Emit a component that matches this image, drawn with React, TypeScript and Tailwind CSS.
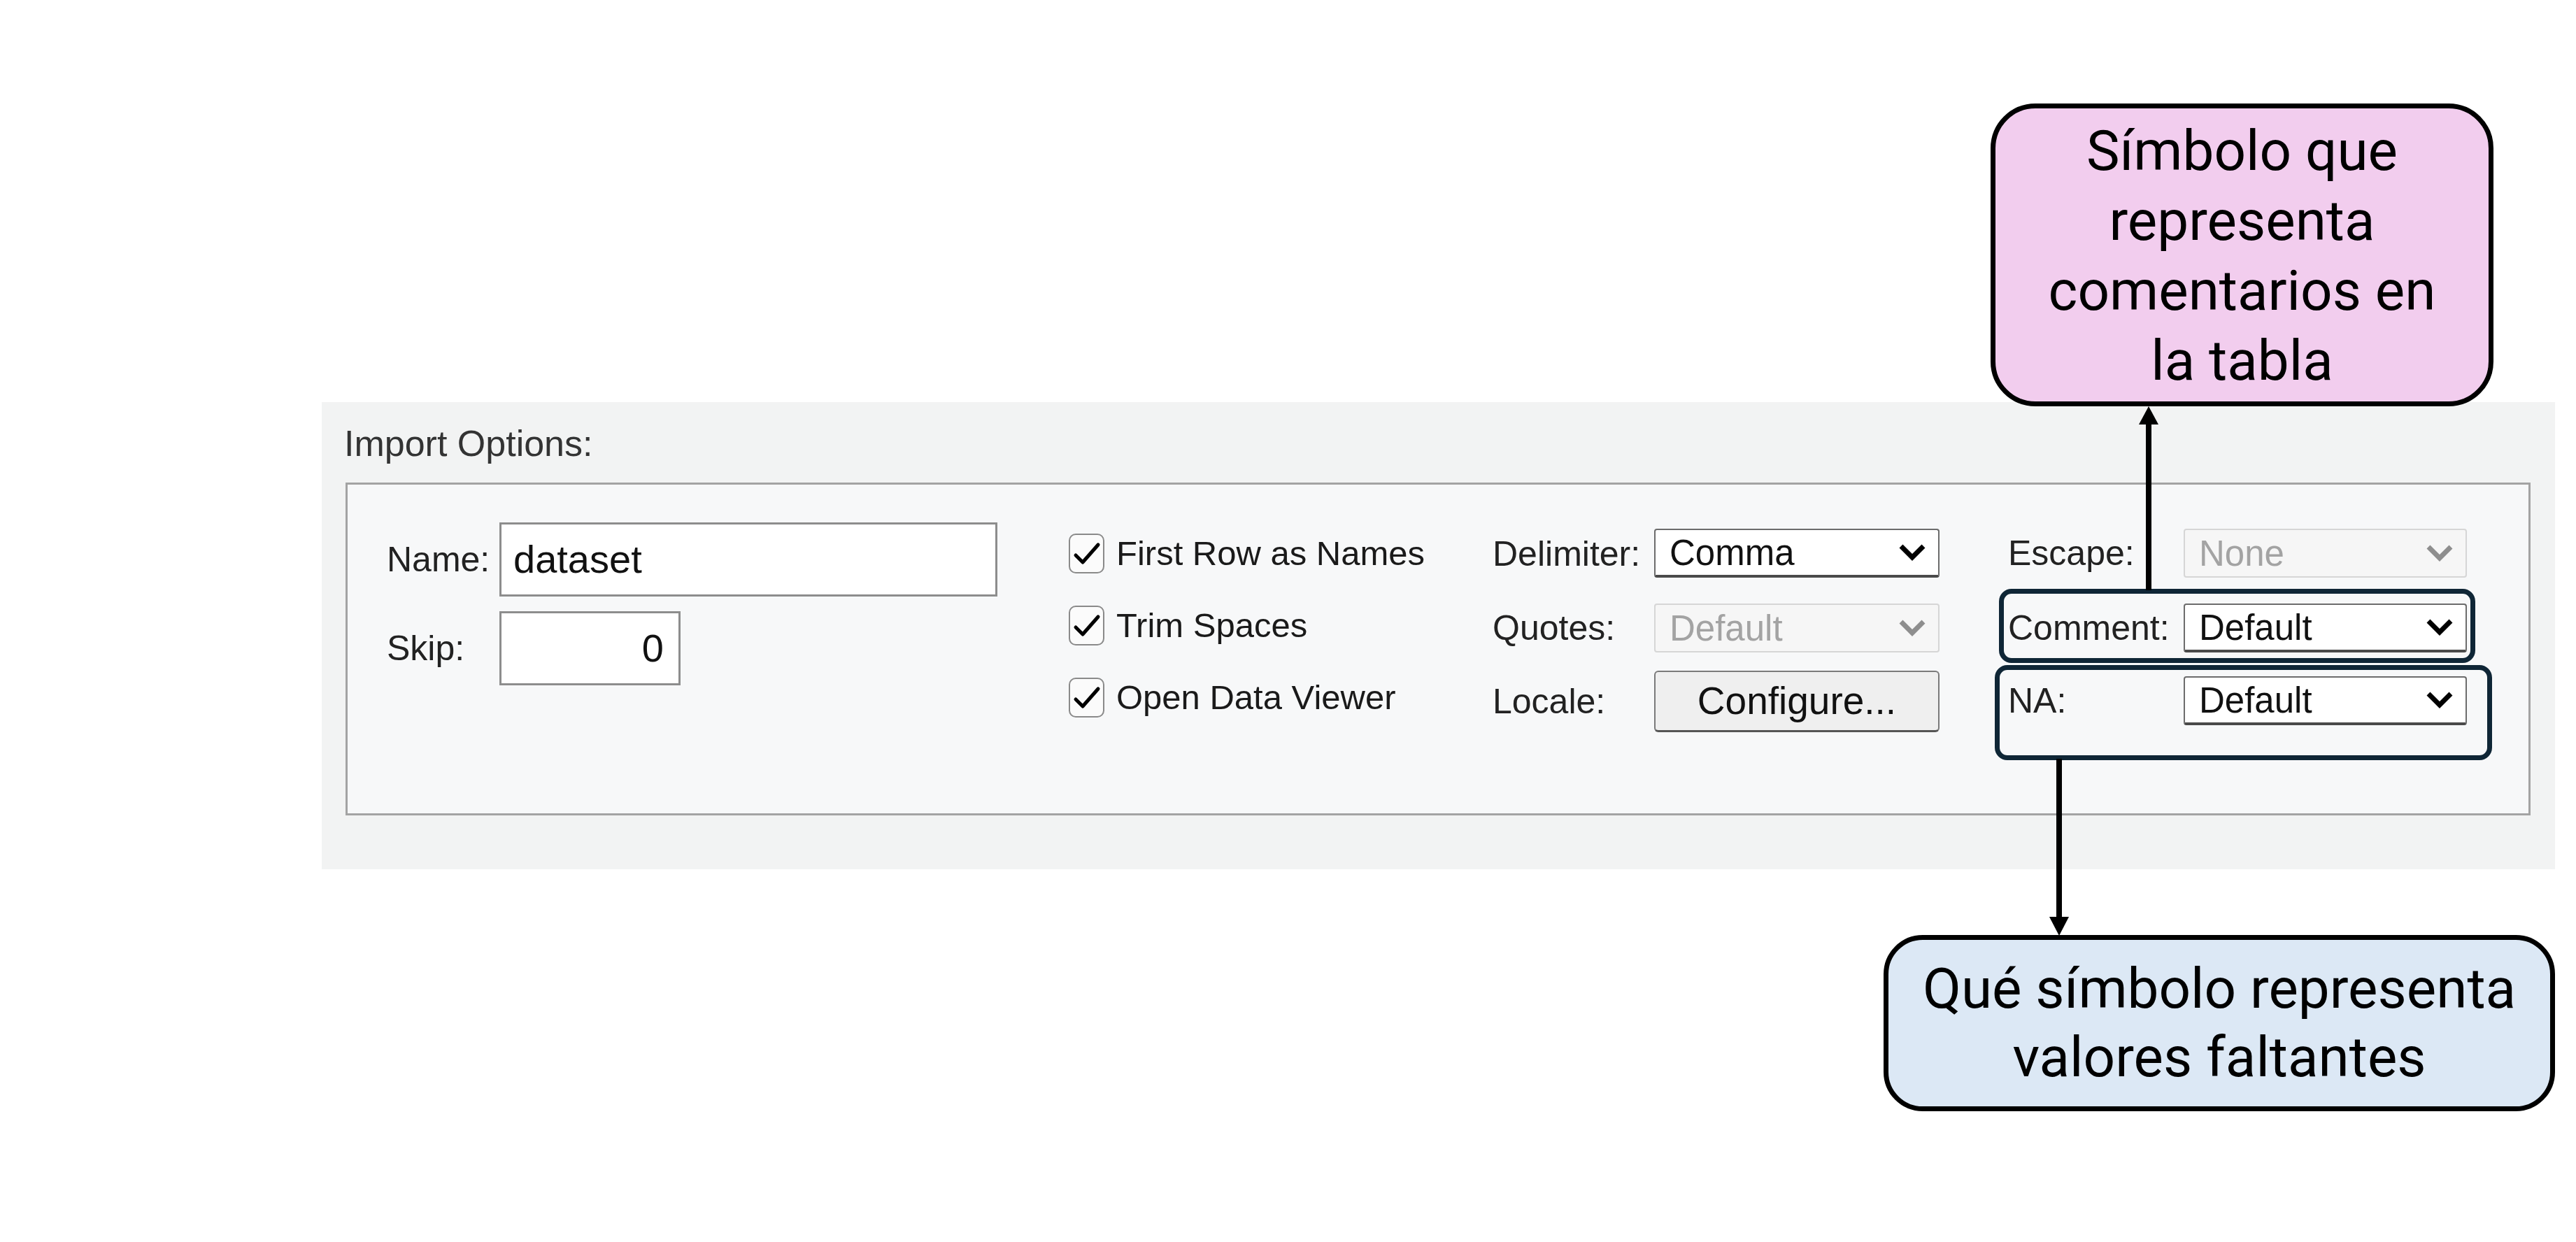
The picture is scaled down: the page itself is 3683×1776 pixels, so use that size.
import React from 'react';

const UI = "[font-family:'Liberation_Sans',Arial,sans-serif]";
const CALLOUT = "[font-family:Roboto,'Liberation_Sans',sans-serif]";

function Chevron({ color }: { color: string }) {
  return (
    <svg width="38" height="24" viewBox="0 0 38 24" fill="none">
      <polyline points="3,3 19,19 35,3" stroke={color} strokeWidth="7" strokeLinejoin="miter" />
    </svg>
  );
}

function Select({ value, disabled = false }: { value: string; disabled?: boolean }) {
  return (
    <div
      className={
        disabled
          ? 'flex h-[70px] w-full items-center justify-between rounded-[4px] border-2 border-[#d6d6d6] bg-[#f6f6f6] pl-[20px] pr-[18px] text-[51px] leading-none text-[#a3a3a3]'
          : 'flex h-[70px] w-full items-center justify-between rounded-[4px] border-2 border-b-4 border-[#6c6c6c] border-b-[#4a4a4a] bg-white pl-[20px] pr-[18px] text-[51px] leading-none text-[#111]'
      }
    >
      <span>{value}</span>
      <Chevron color={disabled ? '#8e8e8e' : '#000'} />
    </div>
  );
}

function Check({ label }: { label: string }) {
  return (
    <div className="flex h-[57px] items-center gap-[17px]">
      <div className="flex h-[57px] w-[51px] items-center justify-center rounded-[10px] border-2 border-[#8a8a8a] bg-[#fbfbfb]">
        <svg width="40" height="34" viewBox="0 0 40 34" fill="none">
          <polyline points="4,19 14,29 36,4" stroke="#000" strokeWidth="5" strokeLinejoin="round" strokeLinecap="round" />
        </svg>
      </div>
      <span className="text-[49px] leading-none text-[#1a1a1a]">{label}</span>
    </div>
  );
}

function Label({ children }: { children: React.ReactNode }) {
  return <span className="pl-[5px] text-[50px] leading-none text-[#222]">{children}</span>;
}

export default function App() {
  return (
    <div className={`relative h-[1776px] w-[3683px] overflow-hidden bg-white ${UI}`}>
      {/* dialog section */}
      <div className="ml-[460px] mt-[575px] flex h-[668px] w-[3193px] flex-col bg-[#f2f3f3] pl-[32px] pt-[33px]">
        <div className="text-[52px] leading-none text-[#333]">Import Options:</div>

        <div className="ml-[2px] mt-[30px] flex h-[476px] w-[3124px] items-start border-[3px] border-[#a3a3a3] bg-[#f7f8f9]">
          {/* name / skip */}
          <div className="ml-[51px] mt-[54px] grid grid-cols-[166px_auto] items-center gap-y-[21px]">
            <Label>Name:</Label>
            <div className="flex h-[106px] w-[712px] items-center border-[3px] border-[#8d8d8d] bg-white pl-[17px] text-[56px] leading-none text-[#111]">
              dataset
            </div>
            <Label>Skip:</Label>
            <div className="flex h-[106px] w-[259px] items-center justify-end border-[3px] border-[#8d8d8d] bg-white pr-[21px] text-[56px] leading-none text-[#111]">
              0
            </div>
          </div>

          {/* checkboxes */}
          <div className="ml-[102px] mt-[70px] flex w-[601px] flex-col gap-[46px]">
            <Check label="First Row as Names" />
            <Check label="Trim Spaces" />
            <Check label="Open Data Viewer" />
          </div>

          {/* delimiter / quotes / locale */}
          <div className="mt-[63px] flex w-[644px] flex-col">
            <div className="grid grid-cols-[236px_408px] items-center">
              <Label>Delimiter:</Label>
              <div className="h-[71px]">
                <Select value="Comma" />
              </div>
            </div>
            <div className="mt-[36px] grid grid-cols-[236px_408px] items-center">
              <Label>Quotes:</Label>
              <Select value="Default" disabled />
            </div>
            <div className="mt-[26px] grid grid-cols-[236px_408px] items-center">
              <Label>Locale:</Label>
              <button className="flex h-[88px] items-center justify-center rounded-[6px] border-2 border-b-[3px] border-[#7a7a7a] border-b-[#555] bg-[#efefef] text-[55px] leading-none text-[#111]">
                Configure...
              </button>
            </div>
          </div>

          {/* escape / comment / na */}
          <div className="ml-[93px] mt-[63px] flex w-[661px] flex-col">
            <div className="grid grid-cols-[256px_405px] items-center">
              <Label>Escape:</Label>
              <Select value="None" disabled />
            </div>
            <div className="mt-[37px] grid grid-cols-[256px_405px] items-center">
              <Label>Comment:</Label>
              <Select value="Default" />
            </div>
            <div className="mt-[34px] grid grid-cols-[256px_405px] items-center">
              <Label>NA:</Label>
              <Select value="Default" />
            </div>
          </div>
        </div>
      </div>

      {/* highlight frames */}
      <div className="absolute left-[2858px] top-[842px] h-[106px] w-[681px] rounded-[18px] border-[7px] border-[#0f2636]" />
      <div className="absolute left-[2852px] top-[951px] h-[136px] w-[711px] rounded-[18px] border-[7px] border-[#0f2636]" />

      {/* arrows */}
      <svg className="absolute left-[3058px] top-[581px]" width="28" height="263" viewBox="0 0 28 263">
        <polygon points="14,0 0,26 28,26" fill="#000" />
        <line x1="14" y1="24" x2="14" y2="263" stroke="#000" strokeWidth="8" />
      </svg>
      <svg className="absolute left-[2930px] top-[1085px]" width="28" height="253" viewBox="0 0 28 253">
        <line x1="14" y1="0" x2="14" y2="229" stroke="#000" strokeWidth="8" />
        <polygon points="0,226 28,226 14,253" fill="#000" />
      </svg>

      {/* callouts */}
      <div
        className={`absolute left-[2846px] top-[148px] flex h-[433px] w-[719px] items-center justify-center rounded-[64px] border-[7px] border-black bg-[#f2cdee] pt-[2px] text-center text-[80px] leading-[100px] text-black ${CALLOUT}`}
      >
        <div>
          Símbolo que
          <br />
          representa
          <br />
          comentarios en
          <br />
          la tabla
        </div>
      </div>
      <div
        className={`absolute left-[2693px] top-[1337px] flex h-[252px] w-[960px] items-center justify-center rounded-[56px] border-[7px] border-black bg-[#dce8f5] text-center text-[80px] leading-[98px] text-black ${CALLOUT}`}
      >
        <div>
          Qué símbolo representa
          <br />
          valores faltantes
        </div>
      </div>
    </div>
  );
}
